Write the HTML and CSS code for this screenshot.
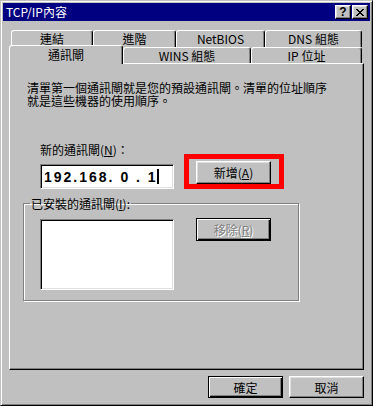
FILE: index.html
```html
<!DOCTYPE html>
<html lang="zh-Hant">
<head>
  <meta charset="UTF-8" />
  <title>TCP/IP內容</title>
  <link rel="stylesheet" href="styles.css">
</head>
<body>
  <div class="window">
    <div class="titlebar">
      <span class="title">TCP/IP內容</span>
      <div class="title-buttons">
        <span class="tbtn help">?</span>
        <span class="tbtn close">
          <svg width="8" height="7" viewBox="0 0 8 7" shape-rendering="crispEdges">
            <path fill="#000" d="M0 0h2v1h-2z M6 0h2v1h-2z M1 1h2v1h-2z M5 1h2v1h-2z M2 2h4v1h-4z M3 3h2v1h-2z M2 4h4v1h-4z M1 5h2v1h-2z M5 5h2v1h-2z M0 6h2v1h-2z M6 6h2v1h-2z"/>
          </svg>
        </span>
      </div>
    </div>

    <div class="dialog">
      <div class="tab-row back">
        <div class="tab tab-link">連結</div>
        <div class="tab tab-adv">進階</div>
        <div class="tab tab-netbios">NetBIOS</div>
        <div class="tab tab-dns">DNS 組態</div>
      </div>
      <div class="tab-row front">
        <div class="tab tab-gw selected">通訊閘</div>
        <div class="tab tab-wins">WINS 組態</div>
        <div class="tab tab-ip">IP 位址</div>
      </div>

      <div class="panel">
        <p class="desc">清單第一個通訊閘就是您的預設通訊閘。清單的位址順序<br>就是這些機器的使用順序。</p>

        <div class="gateway-row">
          <div class="new-gateway">
            <label class="field-label">新的通訊閘(<u>N</u>)：</label>
            <div class="ip-input">192.168. 0 . 1<span class="caret"></span></div>
          </div>
          <div class="highlight">
            <button class="btn">新增(<u>A</u>)</button>
          </div>
        </div>

        <fieldset class="group">
          <legend>已安裝的通訊閘(<u>I</u>):</legend>
          <div class="group-body">
            <div class="listbox"></div>
            <button class="btn default disabled">移除(<u>R</u>)</button>
          </div>
        </fieldset>
      </div>

      <div class="actions">
        <button class="btn default">確定</button>
        <button class="btn">取消</button>
      </div>
    </div>
  </div>
</body>
</html>
```

FILE: styles.css
```css
body {
  margin: 0;
  background: #c0c0c0;
  font-family: "Noto Sans CJK TC", sans-serif;
  font-size: 12px;
  color: #000;
}
.window {
  width: 373px;
  height: 406px;
  box-sizing: border-box;
  border: 1px solid;
  border-color: #c0c0c0 #000 #000 #c0c0c0;
  box-shadow: inset 1px 1px #fff, inset -1px -1px #808080;
  padding: 2px;
}
.titlebar {
  height: 18px;
  display: flex;
  align-items: center;
  background: #000080;
  color: #fff;
  padding: 0 2px 0 3px;
}
.title {
  line-height: 18px;
}
.title-buttons {
  margin-left: auto;
  display: flex;
  gap: 1px;
}
.tbtn {
  box-sizing: border-box;
  width: 16px;
  height: 14px;
  display: flex;
  align-items: center;
  justify-content: center;
  background: #c0c0c0;
  color: #000;
  border: 1px solid;
  border-color: #fff #000 #000 #fff;
  box-shadow: inset -1px -1px #808080, inset 1px 1px #dfdfdf;
}
.help {
  font-family: "Liberation Sans", sans-serif;
  font-weight: bold;
  font-size: 12px;
  line-height: 12px;
}
.dialog {
  padding: 9px 0 0 6px;
}
.tab-row {
  display: flex;
  align-items: flex-start;
}
.tab-row.back {
  margin-left: 2px;
  height: 17px;
}
.tab-row.front {
  height: 16px;
}
.tab {
  box-sizing: border-box;
  background: #c0c0c0;
  text-align: center;
  border-top: 1px solid #fff;
  border-left: 1px solid #fff;
  border-right: 1px solid #000;
  border-radius: 3px 3px 0 0;
  box-shadow: inset -1px 0 #808080;
}
.back .tab {
  height: 17px;
  line-height: 16px;
}
.front .tab {
  height: 16px;
  line-height: 15px;
}
.front .tab.selected {
  height: 19px;
  margin-top: -2px;
  padding-top: 1px;
  position: relative;
  z-index: 1;
}
.tab-link { width: 82px; }
.tab-adv { width: 83px; }
.tab-netbios { width: 89px; }
.tab-dns { width: 97px; }
.tab-gw { width: 114px; }
.tab-wins { width: 128px; }
.tab-ip { width: 111px; }

.panel {
  box-sizing: border-box;
  width: 355px;
  height: 307px;
  border: 1px solid;
  border-color: #fff #000 #000 #fff;
  box-shadow: inset -1px -1px #808080;
  padding: 17px 0 0 13px;
}
.desc {
  margin: 0 0 0 4px;
  line-height: 13px;
}
.gateway-row {
  display: flex;
  align-items: flex-start;
  margin: 36px 0 0 17px;
}
.new-gateway {
  display: flex;
  flex-direction: column;
}
.field-label {
  line-height: 13px;
}
.ip-input {
  box-sizing: border-box;
  width: 134px;
  height: 25px;
  margin-top: 8px;
  padding: 0 0 0 3px;
  display: flex;
  align-items: center;
  background: #fff;
  border: 1px solid;
  border-color: #808080 #fff #fff #808080;
  box-shadow: inset 1px 1px #000, inset -1px -1px #dfdfdf;
  font-family: "Liberation Sans", sans-serif;
  font-weight: bold;
  font-size: 14px;
  letter-spacing: 2px;
  white-space: pre;
}
.caret {
  display: inline-block;
  width: 0;
  height: 15px;
  border-left: 2px solid #000;
  margin-left: -1px;
}
.highlight {
  margin: 11px 0 0 10px;
  border: 5px solid #ff0000;
  padding: 2px 8px 0 7px;
}
.btn {
  box-sizing: border-box;
  width: 75px;
  height: 23px;
  padding: 0;
  margin: 0;
  font-family: "Noto Sans CJK TC", sans-serif;
  font-size: 12px;
  line-height: 20px;
  color: #000;
  background: #c0c0c0;
  border: 1px solid;
  border-color: #fff #000 #000 #fff;
  border-radius: 0;
  box-shadow: inset -1px -1px #808080, inset 1px 1px #dfdfdf;
}
.btn.default {
  border-color: #000;
  box-shadow: inset 1px 1px #fff, inset -1px -1px #000, inset -2px -2px #808080;
}
.btn.disabled {
  color: #808080;
  text-shadow: 1px 1px #fff;
}
.group {
  box-sizing: border-box;
  width: 276px;
  margin: 8px 0 0 0;
  padding: 0 0 10px 6px;
  min-width: 0;
  border: 1px solid #808080;
  box-shadow: 1px 1px 0 #fff, inset 1px 1px 0 #fff;
}
.group legend {
  padding: 0 1px;
  line-height: 13px;
}
.group-body {
  display: flex;
  align-items: flex-start;
  margin: 9px 0 0 10px;
}
.listbox {
  box-sizing: border-box;
  width: 134px;
  height: 71px;
  margin-right: 22px;
  background: #fff;
  border: 1px solid;
  border-color: #808080 #fff #fff #808080;
  box-shadow: inset 1px 1px #000, inset -1px -1px #dfdfdf;
}
.group-body .btn {
  margin-top: -1px;
}
.actions {
  width: 355px;
  display: flex;
  justify-content: flex-end;
  gap: 6px;
  margin-top: 6px;
}
.actions .btn {
  height: 22px;
  line-height: 19px;
}
```
